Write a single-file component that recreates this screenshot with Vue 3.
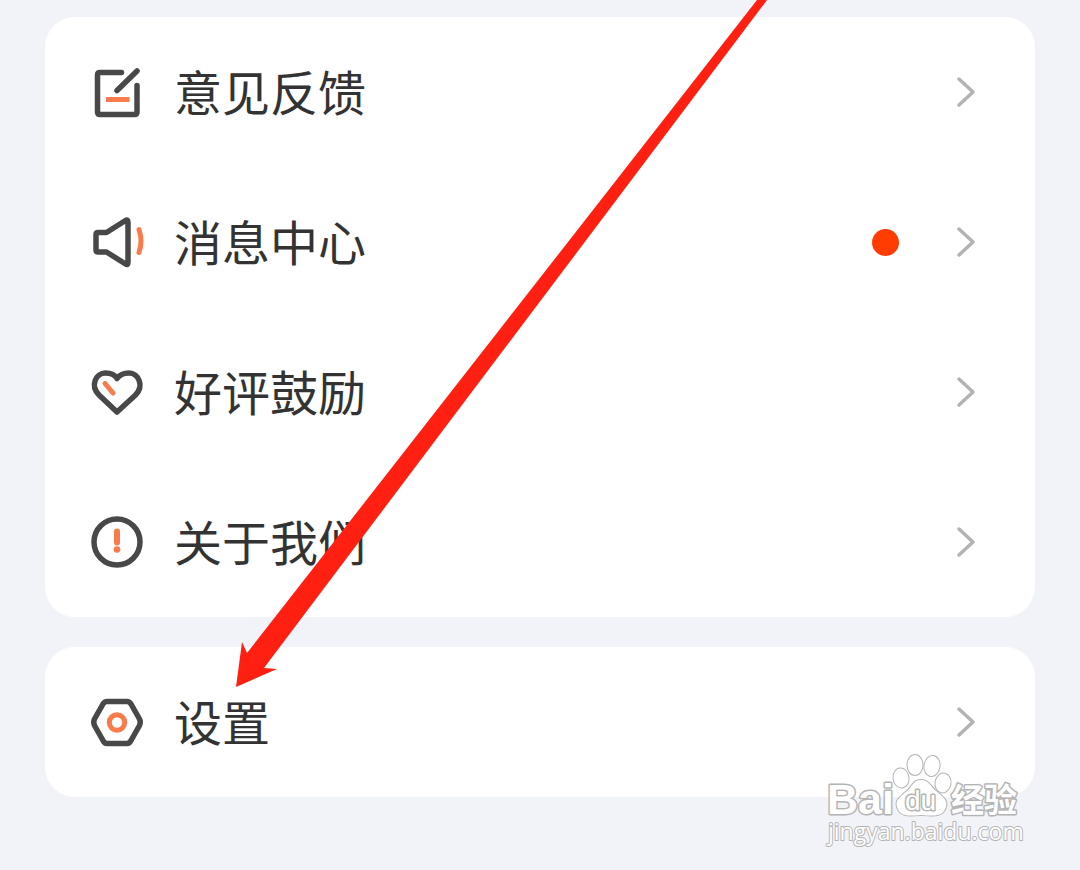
<script setup>
const groups = [
  [
    { icon: 'feedback', label: '意见反馈' },
    { icon: 'message', label: '消息中心', unread: true },
    { icon: 'heart', label: '好评鼓励' },
    { icon: 'about', label: '关于我们' }
  ],
  [{ icon: 'settings', label: '设置' }]
]
</script>

<template>
  <main class="page">
    <nav v-for="(items, i) in groups" :key="i" class="card">
      <a v-for="item in items" :key="item.icon" class="row" href="#">
        <svg class="icon" viewBox="0 0 60 60" aria-hidden="true">
          <template v-if="item.icon === 'feedback'">
            <path class="line" d="M34.500 10.500H13Q10.500 10.500 10.500 13V50Q10.500 52.500 13 52.500H47.500Q50 52.500 50 50V23.500" />
            <path class="line" d="M30 28.500L50 9" />
            <path class="accent butt" d="M19 37.500H42.500" />
          </template>
          <template v-else-if="item.icon === 'message'">
            <path class="line" d="M9 22.500Q9 20.500 11 20.500H19.500L38.500 8.500Q41 7 41 10.500V50Q41 53.500 38.500 52L19.500 40H11Q9 40 9 38Z" />
            <path class="accent" d="M52 17.500Q56 29 52 40.500" />
          </template>
          <template v-else-if="item.icon === 'heart'">
            <path class="line" d="M30 50L12 33C3 24 8.500 11 18.500 11C24 11 28 13 30 16.500C32.500 13 37 11 42 11C51.500 11 57.500 24 48.500 33Z" />
            <path class="accent" d="M18 21.500L26 31" />
          </template>
          <template v-else-if="item.icon === 'about'">
            <circle class="line" cx="30" cy="30" r="23" />
            <path class="accent mark" d="M30 19.500V30.500" />
            <circle class="dot" cx="30" cy="37.500" r="3.300" />
          </template>
          <template v-else>
            <path class="line" d="M20 9.500H40Q42.500 9.500 44 12L52.500 27Q54 30 52.500 33.500L44 48.500Q42.500 51.500 40 51.500H20Q17.500 51.500 16 48.500L7.500 33.500Q6 30 7.500 27L16 12Q17.500 9.500 20 9.500Z" />
            <circle class="accent" cx="30" cy="30.500" r="7.700" />
          </template>
        </svg>
        <span class="label">{{ item.label }}</span>
        <span v-if="item.unread" class="badge" />
        <svg class="chevron" viewBox="0 0 20 32" aria-hidden="true">
          <path d="M3 3L17 16L3 29" />
        </svg>
      </a>
    </nav>

    <svg class="arrow" viewBox="0 0 780 700" aria-hidden="true">
      <polygon points="236,687 242,642 247,653 757,0 767,0 264,668 277,669" />
    </svg>

    <svg class="watermark" viewBox="0 0 210 104" role="img" aria-label="Baidu 经验 jingyan.baidu.com">
      <text class="brand" x="4" y="63">Bai</text>
      <g class="paw">
        <ellipse cx="78" cy="27" rx="7.500" ry="9.500" transform="rotate(-8 78 27)" />
        <ellipse cx="92" cy="14" rx="7.500" ry="10" />
        <ellipse cx="109" cy="15" rx="7.500" ry="10" transform="rotate(8 109 15)" />
        <ellipse cx="120" cy="32" rx="7.500" ry="9.500" transform="rotate(10 120 32)" />
        <path d="M98 29C106 29 107 35 113 40C120 46 125 49 123 56C120 66 111 65 98 64C86 65 77 66 74 56C72 49 77 46 84 40C90 35 90 29 98 29Z" />
      </g>
      <text class="du" x="82" y="59">du</text>
      <text class="cn" x="128" y="61">经验</text>
      <text class="url" x="5" y="89">jingyan.baidu.com</text>
    </svg>
  </main>
</template>

<style>
body {
  margin: 0;
  background: #f2f3f8;
}
</style>

<style scoped>
.page {
  position: relative;
  box-sizing: border-box;
  min-height: 100vh;
  padding: 17px 45px;
  display: flex;
  flex-direction: column;
  gap: 30px;
  overflow: hidden;
  background: #f2f3f8;
  font-family: "Liberation Sans", "Noto Sans CJK SC", sans-serif;
}
.card {
  background: #fff;
  border-radius: 30px;
}
.row {
  display: flex;
  align-items: center;
  height: 150px;
  padding: 0 59px 0 42px;
  color: #333;
  text-decoration: none;
}
.icon {
  width: 60px;
  height: 60px;
  flex: none;
}
.line {
  fill: none;
  stroke: #484848;
  stroke-width: 5.500;
  stroke-linecap: round;
  stroke-linejoin: round;
}
.accent {
  fill: none;
  stroke: #f97b4b;
  stroke-width: 5;
  stroke-linecap: round;
}
.butt {
  stroke-linecap: butt;
}
.mark {
  stroke-width: 6;
}
.dot {
  fill: #f97b4b;
}
.label {
  flex: 1;
  margin-left: 27px;
  padding-top: 6px;
  font-size: 48px;
  line-height: 60px;
}
.badge {
  width: 27px;
  height: 27px;
  margin-right: 57px;
  border-radius: 50%;
  background: #ff3d03;
}
.chevron {
  width: 20px;
  height: 32px;
  flex: none;
}
.chevron path {
  fill: none;
  stroke: #b3b3b3;
  stroke-width: 3.500;
  stroke-linecap: round;
  stroke-linejoin: round;
}
.arrow {
  position: absolute;
  top: 0;
  left: 0;
  width: 780px;
  height: 700px;
  fill: #ff2012;
  pointer-events: none;
}
.watermark {
  position: absolute;
  right: 47px;
  bottom: 15px;
  width: 210px;
  height: 104px;
  pointer-events: none;
}
.watermark text,
.paw {
  fill: #fff;
  stroke: #b4b4b4;
  stroke-width: 2;
  stroke-linejoin: round;
  paint-order: stroke;
}
.watermark .brand {
  font-size: 43px;
  font-weight: 700;
  stroke-width: 3;
}
.watermark .du {
  font-size: 28px;
  font-weight: 400;
  stroke-width: 3;
}
.watermark .cn {
  font-size: 33px;
  font-weight: 700;
  stroke-width: 3;
}
.watermark .url {
  font-family: "Open Sans", sans-serif;
  font-size: 23px;
}
</style>
